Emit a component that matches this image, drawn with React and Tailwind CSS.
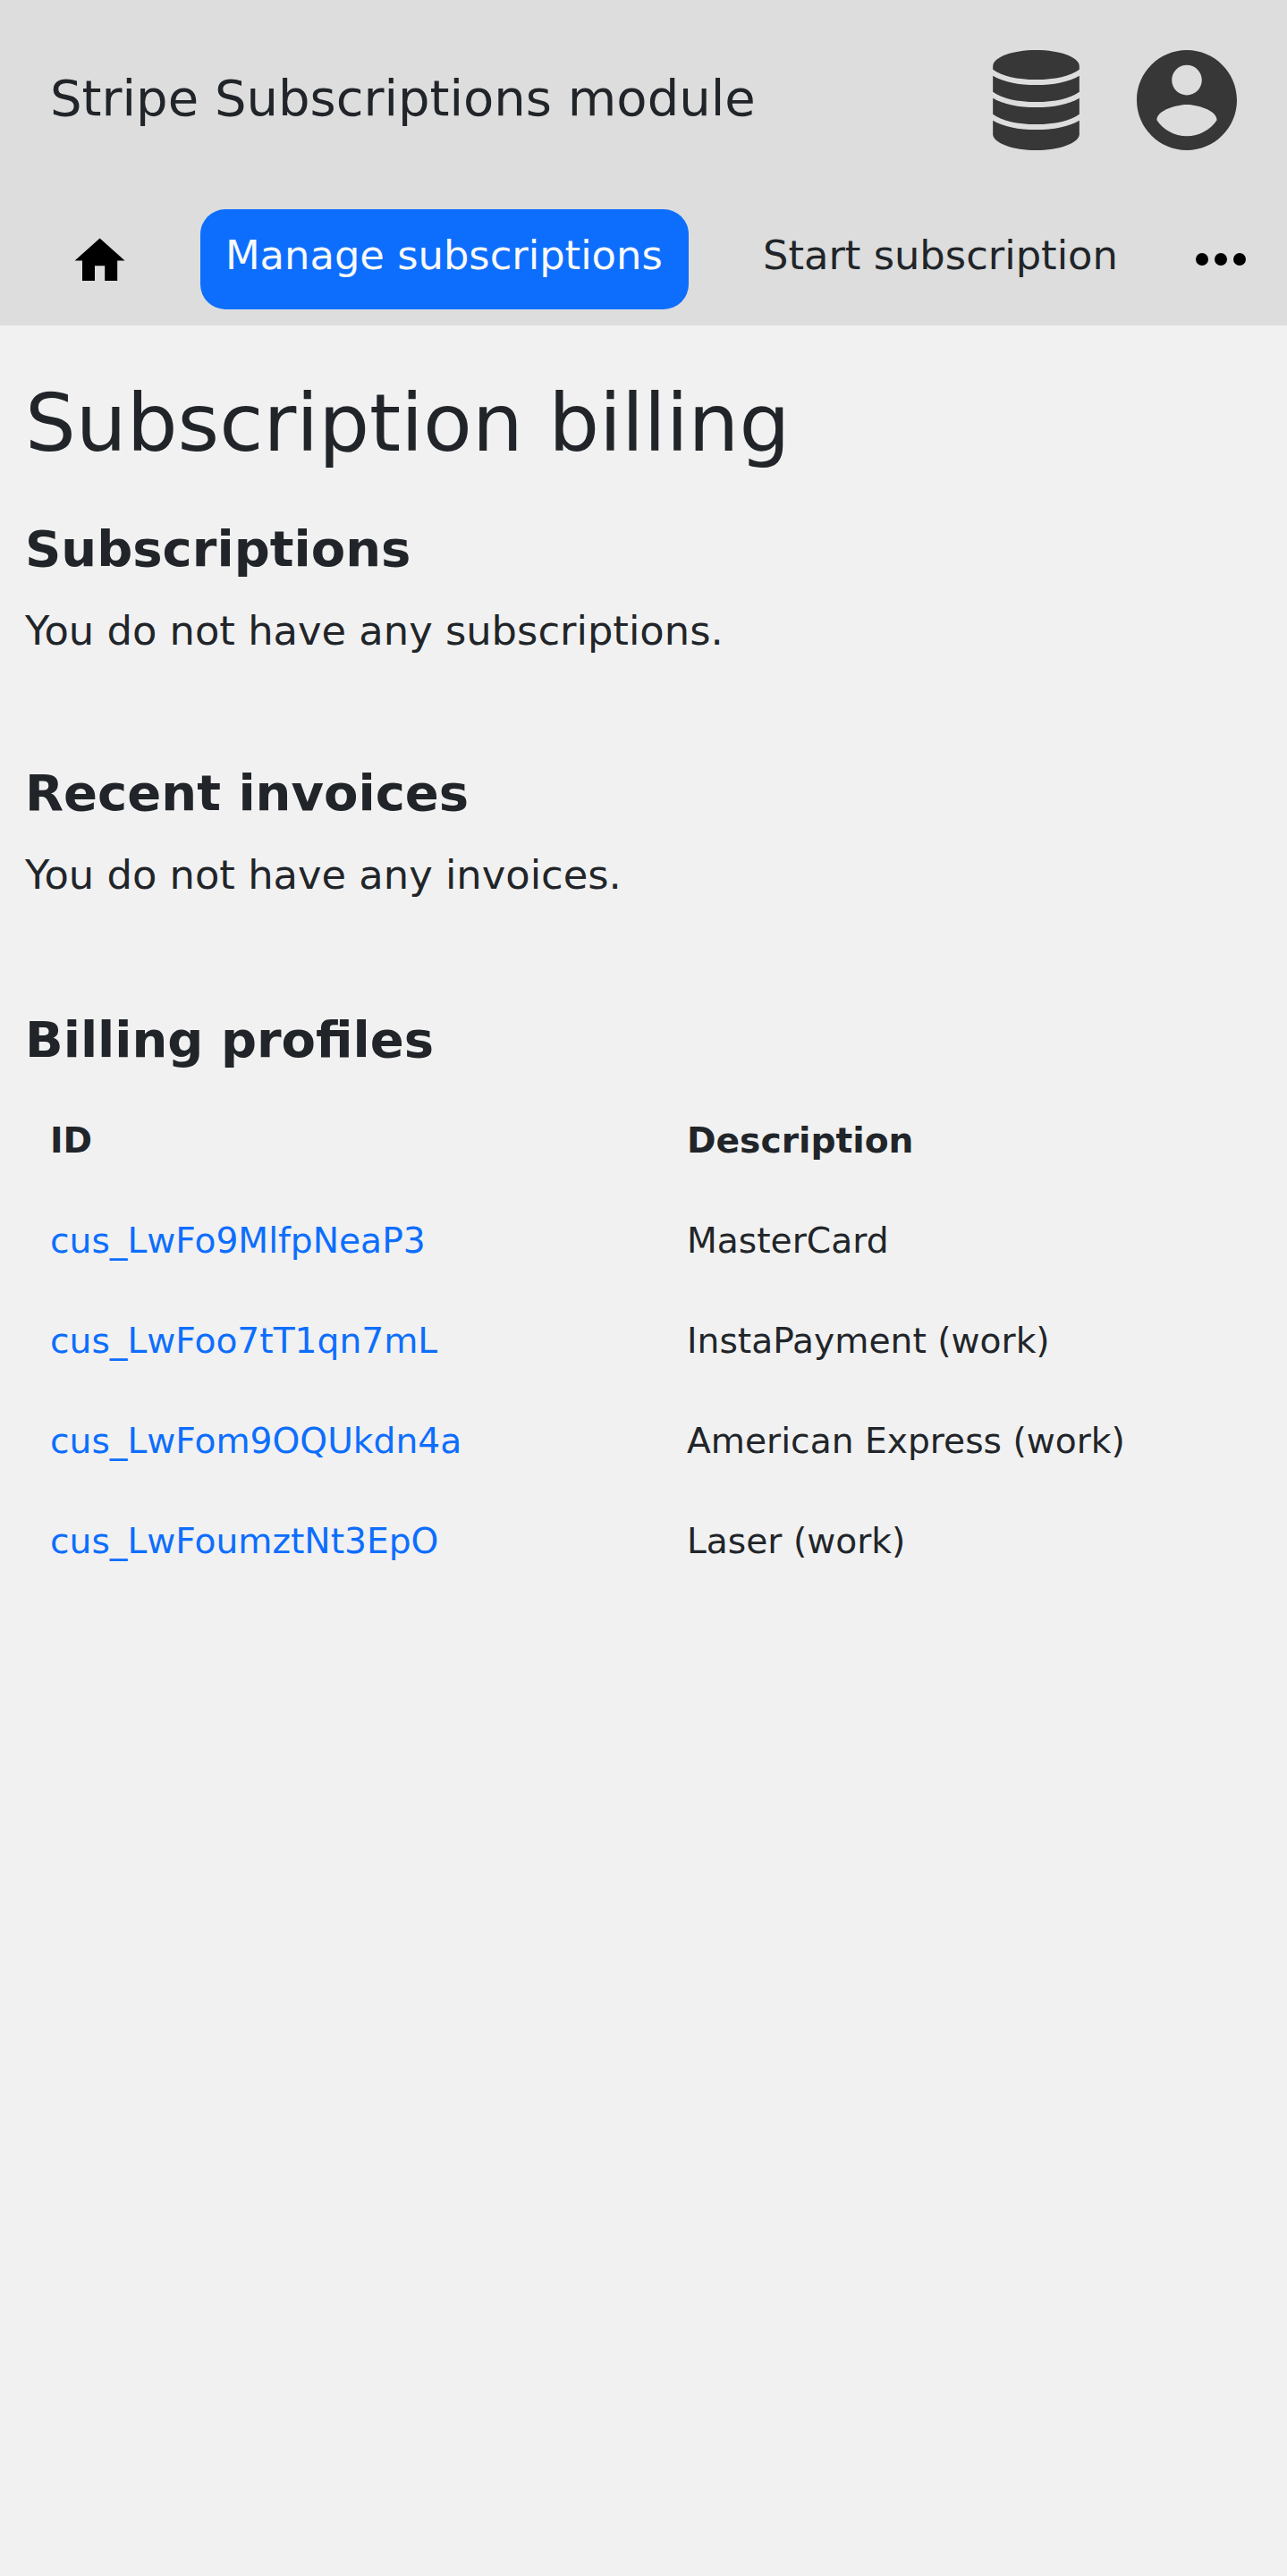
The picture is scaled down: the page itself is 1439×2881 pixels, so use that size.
const profiles = [
  ["cus_LwFo9MlfpNeaP3", "MasterCard"],
  ["cus_LwFoo7tT1qn7mL", "InstaPayment (work)"],
  ["cus_LwFom9OQUkdn4a", "American Express (work)"],
  ["cus_LwFoumztNt3EpO", "Laser (work)"],
];

function DatabaseIcon() {
  return (
    <svg className="h-28 w-[97px] fill-[#373737]" viewBox="0 0 290 336">
      <path d="M0 54C0 24 65 0 145 0S290 24 290 54V65C262 87 207 99 145 99S28 87 0 65Z" />
      <path d="M0 86C35 107 86 117 145 117S255 107 290 86V140C262 162 207 174 145 174S28 162 0 140Z" />
      <path d="M0 161C35 182 86 192 145 192S255 182 290 161V215C262 237 207 249 145 249S28 237 0 215Z" />
      <path d="M0 236C35 257 86 267 145 267S255 257 290 236V284C286 313 221 336 145 336S4 313 0 284Z" />
    </svg>
  );
}

function AccountIcon() {
  return (
    <svg className="size-28 fill-[#373737]" viewBox="2 2 20 20">
      <path d="M12 2C6.480 2 2 6.480 2 12s4.480 10 10 10 10-4.480 10-10S17.520 2 12 2zm0 3c1.660 0 3 1.340 3 3s-1.340 3-3 3-3-1.340-3-3 1.340-3 3-3zm0 14.200c-2.500 0-4.710-1.280-6-3.220.030-1.990 4-3.080 6-3.080 1.990 0 5.970 1.090 6 3.080-1.290 1.940-3.500 3.220-6 3.220z" />
    </svg>
  );
}

function Section({ title, children }) {
  return (
    <section>
      <h2 className="text-[56px] leading-[67px] font-bold">{title}</h2>
      {children}
    </section>
  );
}

export default function App() {
  return (
    <div className="min-h-screen bg-[#f1f1f1] font-['DejaVu_Sans',sans-serif] text-[44.8px] leading-[67px] text-[#212529]">
      <header className="h-[364px] bg-[#dddddd]">
        <div className="flex h-56 items-center justify-between px-14">
          <div className="mt-[68px] self-start text-[56px] leading-[83px] whitespace-nowrap">Stripe Subscriptions module</div>
          <div className="flex items-center gap-16">
            <DatabaseIcon />
            <AccountIcon />
          </div>
        </div>
        <nav className="flex items-start pt-[10.4px] whitespace-nowrap">
          <svg className="mt-[23.8px] ml-[78.4px] size-[67.2px] shrink-0" viewBox="0 0 24 24">
            <path d="M10 20v-6h4v6h5v-8h3L12 3 2 12h3v8z" />
          </svg>
          <a className="ml-[78.4px] h-28 w-[546px] shrink-0 rounded-[28px] bg-[#0d6efd] px-7 pt-[18px] text-[#f8f9fa]">
            Manage subscriptions
          </a>
          <a className="ml-[83px] w-[470px] shrink-0 pt-[18px]">Start subscription</a>
          <svg className="mt-3.5 size-[84px] shrink-0" viewBox="0 0 24 24">
            <circle cx="6" cy="12" r="2" />
            <circle cx="12" cy="12" r="2" />
            <circle cx="18" cy="12" r="2" />
          </svg>
        </nav>
      </header>
      <main className="px-7 pt-[55px]">
        <h1 className="mb-[53px] text-[89.6px] leading-[108px]">Subscription billing</h1>
        <Section title="Subscriptions">
          <p className="mt-[25px] mb-[114px]">You do not have any subscriptions.</p>
        </Section>
        <Section title="Recent invoices">
          <p className="mt-[25px] mb-[117px]">You do not have any invoices.</p>
        </Section>
        <Section title="Billing profiles">
          <table className="mt-6 w-full table-fixed text-left text-[39.2px] leading-[112px]">
            <thead>
              <tr>
                <th className="w-[712px] p-0 pl-7 font-bold">ID</th>
                <th className="p-0 pl-7 font-bold">Description</th>
              </tr>
            </thead>
            <tbody>
              {profiles.map(([id, description]) => (
                <tr key={id}>
                  <td className="p-0 pl-7 text-[#0d6efd]">{id}</td>
                  <td className="p-0 pl-7">{description}</td>
                </tr>
              ))}
            </tbody>
          </table>
        </Section>
      </main>
    </div>
  );
}
